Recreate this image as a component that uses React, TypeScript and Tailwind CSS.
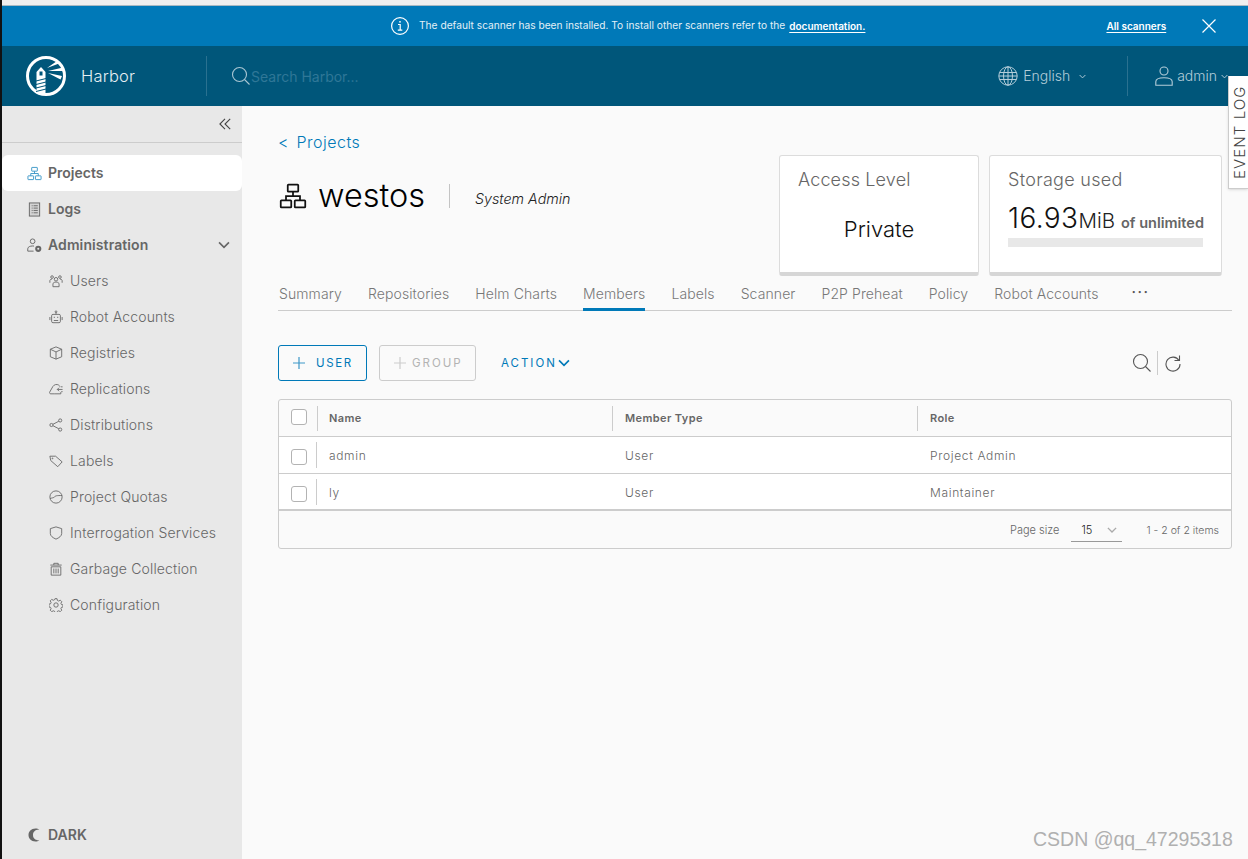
import type { ReactNode } from "react"

const line = { fill: "none", stroke: "currentColor", strokeWidth: 1 } as const

function Ico({ size = 16, children, className = "" }: { size?: number, children: ReactNode, className?: string }) {
    return (
        <svg width={size} height={size} viewBox="0 0 16 16" className={`shrink-0 ${className}`} {...line}>
            {children}
        </svg>
    )
}

const ProjectIcon = (p: { size?: number, className?: string }) => (
    <Ico {...p}>
        <rect x="5" y="1.5" width="6" height="4" rx=".4" />
        <rect x="1" y="10.5" width="6" height="4" rx=".4" />
        <rect x="9" y="10.5" width="6" height="4" rx=".4" />
        <path d="M8 5.5V8M4 10.5V8h8v2.500" />
    </Ico>
)

const icons: Record<string, ReactNode> = {
    users: (
        <>
            <circle cx="8" cy="6" r="2" />
            <circle cx="3.500" cy="3.500" r="1.500" />
            <circle cx="12.500" cy="3.500" r="1.500" />
            <path d="M4.500 14.500v-3c0-1.500 1.500-2.300 3.500-2.300s3.500.8 3.500 2.300v3ZM1 10V7.500c0-1 1-1.600 2.400-1.600M15 10V7.500c0-1-1-1.600-2.400-1.600" />
        </>
    ),
    robot: (
        <>
            <rect x="3" y="5" width="10" height="9.500" rx="1.500" />
            <circle cx="8" cy="2" r="1" />
            <path d="M8 3v2M1 8v3.500M15 8v3.500M5.500 12h5" />
            <path d="M5.500 8.500h1M9.500 8.500h1" strokeWidth="1.500" />
        </>
    ),
    box: <path d="M8 1 14.500 3.700v8.600L8 15l-6.500-2.700V3.700Zm0 5.800L1.500 3.700m6.500 3.100 6.500-3.100M8 6.800V15" />,
    cloud: <path d="M6 13.500H2c-1.300 0-1.700-1.200-1.200-2L4.500 5C6 2.800 9 2.200 11 3.500c.8.500 1.200 1.100 1.500 1.800M6 13.500h7.500v-2M15.500 8.500H9.500M11.500 6.500 9.500 8.500l2 2M13.500 5.500h2M14 11h1.500" />,
    share: (
        <>
            <circle cx="2.800" cy="8" r="1.800" />
            <circle cx="12.800" cy="2.800" r="1.800" />
            <circle cx="12.800" cy="13.200" r="1.800" />
            <path d="m4.500 7.200 6.700-3.500M4.500 8.800l6.700 3.500" />
        </>
    ),
    tag: (
        <>
            <path d="M1 2.500h6.500l7.500 6.500-5 5.500L2 7.500Z" />
            <circle cx="4" cy="5" r=".5" />
        </>
    ),
    quota: (
        <>
            <circle cx="8" cy="8" r="7" />
            <path d="M1.200 9.800C3 9 5.500 9 6.500 7.800 7.500 6.500 9 6.300 15 6.300" />
        </>
    ),
    shield: <path d="M8 1 14.500 3v5.500c0 3-3 5-6.500 6.500-3.500-1.500-6.500-3.500-6.500-6.500V3Z" />,
    trash: <path d="M1.500 3.500h13M5.500 3.500V1.500h5v2M2.500 5.500h11v9.500h-11ZM5.500 7.500V13M8 7.500V13M10.500 7.500V13" />,
    gear: (
        <>
            <circle cx="8" cy="8" r="2.500" />
            <path d="M6.800.8h2.400l.4 2 1.500.7 1.800-1 1.700 1.700-1 1.800.6 1.500 1.900.4v2.300l-1.900.5-.6 1.500 1 1.700-1.700 1.700-1.800-1-1.500.6-.4 2H6.800l-.4-2-1.500-.6-1.800 1-1.700-1.700 1-1.700-.6-1.500-1.900-.5V7l1.900-.4.600-1.500-1-1.800 1.700-1.700 1.800 1 1.500-.7Z" />
        </>
    ),
}

const adminItems = [
    ["users", "Users"],
    ["robot", "Robot Accounts"],
    ["box", "Registries"],
    ["cloud", "Replications"],
    ["share", "Distributions"],
    ["tag", "Labels"],
    ["quota", "Project Quotas"],
    ["shield", "Interrogation Services"],
    ["trash", "Garbage Collection"],
    ["gear", "Configuration"],
]

const tabs = ["Summary", "Repositories", "Helm Charts", "Members", "Labels", "Scanner", "P2P Preheat", "Policy", "Robot Accounts"]

const rows = [
    ["admin", "User", "Project Admin"],
    ["ly", "User", "Maintainer"],
]

function Check({ className = "" }: { className?: string }) {
    return <div className={`w-4 h-4 rounded-[3px] border border-[#b3b3b3] bg-white ${className}`} />
}

function Chevron({ size = 8, className = "" }: { size?: number, className?: string }) {
    return (
        <svg width={size} height={size} viewBox="0 0 8 8" className={`shrink-0 ${className}`} fill="none" stroke="currentColor" strokeWidth="1.100">
            <path d="M.7 2.300 4 5.600l3.300-3.300" />
        </svg>
    )
}

function AlertBar() {
    return (
        <div className="h-10 bg-[#0079b8] text-white flex items-center pl-[388px] shrink-0">
            <svg width="20" height="20" viewBox="0 0 20 20" fill="none" stroke="currentColor" strokeWidth="1.200" className="shrink-0">
                <circle cx="10" cy="10" r="8.400" />
                <path d="M8 8.500h2.200v5.500M7.800 14.200h4.500" />
                <circle cx="10" cy="5.800" r=".9" fill="currentColor" stroke="none" />
            </svg>
            <span className="ml-[9px] text-[10.200px] text-[#e3f0f7] whitespace-nowrap">The default scanner has been installed. To install other scanners refer to the</span>
            <span className="ml-1 text-[10px] font-semibold underline underline-offset-2">documentation.</span>
            <span className="ml-[241px] text-[10px] font-semibold underline underline-offset-2">All scanners</span>
            <svg width="16" height="16" viewBox="0 0 16 16" fill="none" stroke="currentColor" strokeWidth="1.200" className="ml-[35px]">
                <path d="M1.500 1.500l13 13M14.500 1.500l-13 13" />
            </svg>
        </div>
    )
}

function TopBar() {
    return (
        <div className="h-[60px] bg-[#00567a] flex items-center shrink-0 text-[#b4cdd9]">
            <div className="w-[205px] flex items-center pl-6 h-10 border-r border-[#2a7190]">
                <svg width="40" height="40" viewBox="0 0 40 40" className="shrink-0">
                    <circle cx="20" cy="20" r="18.500" fill="none" stroke="#fff" strokeWidth="3" />
                    <path d="M10.500 16 15 11l4.500 5v21.500h-9Z" fill="#fff" />
                    <rect x="13.500" y="15.500" width="3" height="4" fill="#00567a" />
                    <path d="M10 25l10-2.500M10 28.500l10-2.500M10 32l10-2.500M10 35.500l10-2.500" stroke="#00567a" strokeWidth="1" />
                    <path d="M21 12 31 5l2 2.500ZM22 15 37 11.500v3.500ZM22 17 36 20l-1.500 3.500Z" fill="#fff" />
                </svg>
                <span className="ml-[15px] text-[16.500px] font-light tracking-[.2px] text-[#e6eff3]">Harbor</span>
            </div>
            <div className="ml-6 flex items-center">
                <svg width="20" height="20" viewBox="0 0 20 20" fill="none" stroke="#a9c6d3" strokeWidth="1.100" className="shrink-0">
                    <circle cx="8.500" cy="8.500" r="7" />
                    <path d="m13.500 13.500 5 5" />
                </svg>
                <span className="text-[14px] text-[#2f7797]">Search Harbor...</span>
            </div>
            <div className="ml-auto flex items-center">
                <svg width="20" height="20" viewBox="0 0 20 20" fill="none" stroke="currentColor" strokeWidth="1" className="shrink-0">
                    <circle cx="10" cy="10" r="9.200" />
                    <ellipse cx="10" cy="10" rx="4.500" ry="9.200" />
                    <path d="M10 .8v18.400M1.500 6.500h17M1 10h18M1.500 13.500h17" />
                </svg>
                <span className="ml-[5px] text-[14px] font-light pb-px">English</span>
                <Chevron size={7} className="ml-[9px]" />
                <div className="ml-[41px] h-10 border-l border-[#2a7190]" />
                <svg width="20" height="20" viewBox="0 0 20 20" fill="none" stroke="currentColor" strokeWidth="1.100" className="ml-[26px] shrink-0">
                    <circle cx="10" cy="5" r="4" />
                    <path d="M1.800 19.300v-3.500c0-2.400 3.500-4 8.200-4s8.200 1.600 8.200 4v3.500Z" />
                </svg>
                <span className="ml-[3px] text-[14px] font-light pb-[2px]">admin</span>
                <Chevron size={7} className="ml-1 mr-[20px]" />
            </div>
        </div>
    )
}

function SideNav() {
    return (
        <div className="w-60 bg-[#e8e8e8] flex flex-col shrink-0 text-[#666] text-[14px]">
            <div className="h-[37px] border-b border-[#ccc] flex items-center justify-end pr-[11px] shrink-0">
                <svg width="12" height="12" viewBox="0 0 12 12" fill="none" stroke="#444" strokeWidth="1.100">
                    <path d="M6 .8.900 6 6 11.200M11.200.8 6 6l5.200 5.200" />
                </svg>
            </div>
            <div className="mt-3">
                <div className="h-9 bg-white rounded-md flex items-center pl-[25px] font-semibold">
                    <ProjectIcon size={15} className="text-[#3d97c7]" />
                    <span className="ml-[6px] pb-[2px]">Projects</span>
                </div>
                <div className="h-9 flex items-center pl-[25px] font-semibold">
                    <Ico size={15}>
                        <rect x="2.500" y="1" width="11" height="14" fill="#d4d4d4" />
                        <path d="M5 4h1M7 4h4.500M5 6.500h1M7 6.500h4.500M5 9h1M7 9h4.500M5 11.500h1M7 11.500h4.500" />
                    </Ico>
                    <span className="ml-[6px] pb-[2px]">Logs</span>
                </div>
                <div className="h-9 flex items-center pl-[25px] pr-[12px] font-semibold">
                    <Ico size={15}>
                        <circle cx="6" cy="3.500" r="2.500" />
                        <path d="M.8 14v-2.500c0-2 2.500-3 5.200-3 .6 0 1 0 1.500.1M.8 14H7" />
                        <circle cx="12" cy="11.500" r="2.200" strokeWidth="2.200" />
                    </Ico>
                    <span className="ml-[6px] pb-[2px] tracking-[.1px]">Administration</span>
                    <Chevron size={12} className="ml-auto" />
                </div>
                {adminItems.map(([icon, label]) => (
                    <div key={label} className="h-9 flex items-center pl-[47px]">
                        <Ico size={14}>{icons[icon]}</Ico>
                        <span className="ml-[7px] pb-[2px] font-light tracking-[.15px]">{label}</span>
                    </div>
                ))}
            </div>
            <div className="mt-auto mb-[14px] pl-[26px] flex items-center font-semibold text-[14px]">
                <svg width="12" height="14" viewBox="0 0 12 14" fill="#666">
                    <path d="M7.500.5C3 .5.500 3.500.500 7s2.500 6.500 7 6.500c1.500 0 2.800-.5 3.800-1.300C7.500 12.500 5 10.500 5 7s2.500-5.500 6.300-5.200C10.300 1 9 .5 7.500.5Z" />
                </svg>
                <span className="ml-2">DARK</span>
            </div>
        </div>
    )
}

function ProjectHead() {
    return (
        <div className="flex justify-between items-start h-[170px] mr-[10px]">
            <div className="pt-[26px]">
                <div className="text-[16px] text-[#0079b8] font-light flex leading-5">
                    <span>&lt;</span>
                    <span className="ml-2 tracking-[.5px]">Projects</span>
                </div>
                <div className="flex items-center mt-6 ml-px">
                    <ProjectIcon size={28} className="text-[#111]" />
                    <span className="ml-[11px] text-[32.500px] font-light text-black leading-10">westos</span>
                    <div className="ml-6 h-6 border-l border-[#c4c4c4]" />
                    <span className="ml-[25px] mt-[6px] text-[14.300px] font-light italic text-[#222]">System Admin</span>
                </div>
            </div>
            <div className="flex gap-[10px] mt-[49px]">
                <div className="w-[200px] h-[121px] bg-white border border-[#dcdcdc] border-b-4 border-b-[#d6d6d6] rounded-[3px] px-[18px] pt-[12px]">
                    <div className="text-[18px] font-light text-[#666] leading-6 tracking-[.15px]">Access Level</div>
                    <div className="text-[22px] font-light text-[#111] text-center mt-[21px] leading-8">Private</div>
                </div>
                <div className="w-[233px] h-[121px] bg-white border border-[#dcdcdc] border-b-4 border-b-[#d6d6d6] rounded-[3px] px-[18px] pt-[12px]">
                    <div className="text-[18px] font-light text-[#666] leading-6 tracking-[.3px]">Storage used</div>
                    <div className="flex items-baseline mt-[10px] whitespace-nowrap leading-8">
                        <span className="text-[28px] font-light text-[#111] tracking-[.4px]">16.93</span>
                        <span className="text-[20.500px] font-light text-[#222]">MiB</span>
                        <span className="ml-[6px] text-[14.500px] font-semibold text-[#666]">of unlimited</span>
                    </div>
                    <div className="h-[9px] bg-[#e8e8e8] -mt-px" />
                </div>
            </div>
        </div>
    )
}

function Tabs() {
    return (
        <div className="flex items-center gap-[26px] h-[35px] border-b border-[#ccc] pl-px text-[14px] text-[#777] font-light">
            {tabs.map(t => (
                <div key={t} className={`h-[35px] flex items-center tracking-[.1px] ${t === "Members" ? "border-b-[3px] border-[#0079b8] pt-[3px]" : ""}`}>
                    {t}
                </div>
            ))}
            <span className="ml-[7px] mb-[3px] tracking-[1.500px] text-[#555] font-semibold leading-none">···</span>
        </div>
    )
}

function Toolbar() {
    return (
        <div className="flex items-center mt-[34px] h-9 text-[11.500px] tracking-[2px]">
            <div className="h-9 w-[89px] border border-[#0079b8] rounded-[3px] flex items-center pl-[14px] text-[#0079b8]">
                <svg width="12" height="12" viewBox="0 0 12 12" stroke="#3d97c7" strokeWidth="1.200"><path d="M6 0v12M0 6h12" /></svg>
                <span className="ml-[11px] pt-[2px] tracking-[1.600px]">USER</span>
            </div>
            <div className="ml-3 h-9 w-[97px] border border-[#ccc] rounded-[3px] flex items-center pl-[14px] text-[#b3b3b3]">
                <svg width="12" height="12" viewBox="0 0 12 12" stroke="#ccc" strokeWidth="1.200"><path d="M6 0v12M0 6h12" /></svg>
                <span className="ml-[6px] pt-[2px]">GROUP</span>
            </div>
            <div className="ml-[25px] flex items-center text-[#0079b8]">
                <span className="pt-[2px]">ACTION</span>
                <Chevron size={12} className="ml-[1px]" />
            </div>
            <div className="ml-auto mr-[50px] flex items-center text-[#555]">
                <svg width="20" height="20" viewBox="0 0 20 20" fill="none" stroke="currentColor" strokeWidth="1.100">
                    <circle cx="8.500" cy="8.500" r="7" />
                    <path d="m13.500 13.500 5 5" />
                </svg>
                <div className="ml-[5px] h-6 border-l border-[#ccc]" />
                <svg width="18" height="18" viewBox="0 0 18 18" fill="none" stroke="currentColor" strokeWidth="1.100" className="ml-[6px]">
                    <path d="M15 6.500A7 7 0 1 0 16 10M15.500 1.500v5h-5" />
                </svg>
            </div>
        </div>
    )
}

function Table() {
    return (
        <div className="mt-[18px] border border-[#ccc] rounded-[3px] text-[12px] text-[#666] overflow-hidden">
            <div className="h-[37px] flex items-center border-b border-[#ccc] font-semibold text-[11px] tracking-[.4px]">
                <div className="w-[39px] pl-3 flex items-center h-[25px] border-r border-[#ccc]"><Check className="mb-[2px]" /></div>
                <div className="w-[295px] pl-[11px] h-[25px] flex items-center border-r border-[#ccc]">Name</div>
                <div className="w-[305px] pl-3 h-[25px] flex items-center border-r border-[#ccc]">Member Type</div>
                <div className="pl-3">Role</div>
            </div>
            {rows.map((r, i) => (
                <div key={r[0]} className={`h-[37px] flex items-center bg-white font-light tracking-[.65px] ${i === 0 ? "border-b border-[#ccc]" : "border-b-2 border-[#ccc]"}`}>
                    <div className="w-[38px] pl-3 flex items-center h-[26px] border-r border-[#ccc]"><Check className="mt-1" /></div>
                    <div className="w-[296px] pl-3 pt-[2px]">{r[0]}</div>
                    <div className="w-[305px] pl-3 pt-[2px]">{r[1]}</div>
                    <div className="pl-3 pt-[2px]">{r[2]}</div>
                </div>
            ))}
            <div className="h-[37px] flex items-center justify-end pr-3 text-[11px] font-light">
                <span className="pt-[2px]">Page size</span>
                <div className="ml-3 w-[51px] h-[25px] flex items-center border-b border-[#999] pl-[10px] text-[#222] pt-[2px]">
                    15
                    <Chevron size={10} className="ml-[15px] text-[#aaa]" />
                </div>
                <span className="ml-6 pt-[2px] text-[10.500px]">1 - 2 of 2 items</span>
            </div>
        </div>
    )
}

export default function App() {
    return (
        <div className="relative w-[1248px] h-[859px] overflow-hidden flex bg-[#fafafa]" style={{ fontFamily: "Inter, 'Noto Sans', sans-serif" }}>
            <div className="w-[2px] bg-[#111] shrink-0" />
            <div className="flex-1 flex flex-col min-w-0">
                <div className="h-[6px] bg-[#efefef] border-b border-[#a9b9c2] shrink-0" />
                <AlertBar />
                <TopBar />
                <div className="flex flex-1 min-h-0">
                    <SideNav />
                    <div className="flex-1 pl-9 pr-4 min-w-0">
                        <ProjectHead />
                        <Tabs />
                        <Toolbar />
                        <Table />
                    </div>
                </div>
            </div>
            <div className="absolute left-[1228px] top-[76px] w-5 h-[113px] bg-white border-l border-b border-[#ccc] shadow-sm flex items-center justify-center pl-[3px]">
                <span className="-rotate-90 whitespace-nowrap text-[15px] tracking-[1.100px] font-light text-[#444]">EVENT LOG</span>
            </div>
            <div className="absolute left-[1033px] top-[825px] text-[19.500px] text-[#b0b0b0] whitespace-nowrap" style={{ fontFamily: "'Liberation Sans', sans-serif" }}>
                CSDN @qq_47295318
            </div>
        </div>
    )
}
